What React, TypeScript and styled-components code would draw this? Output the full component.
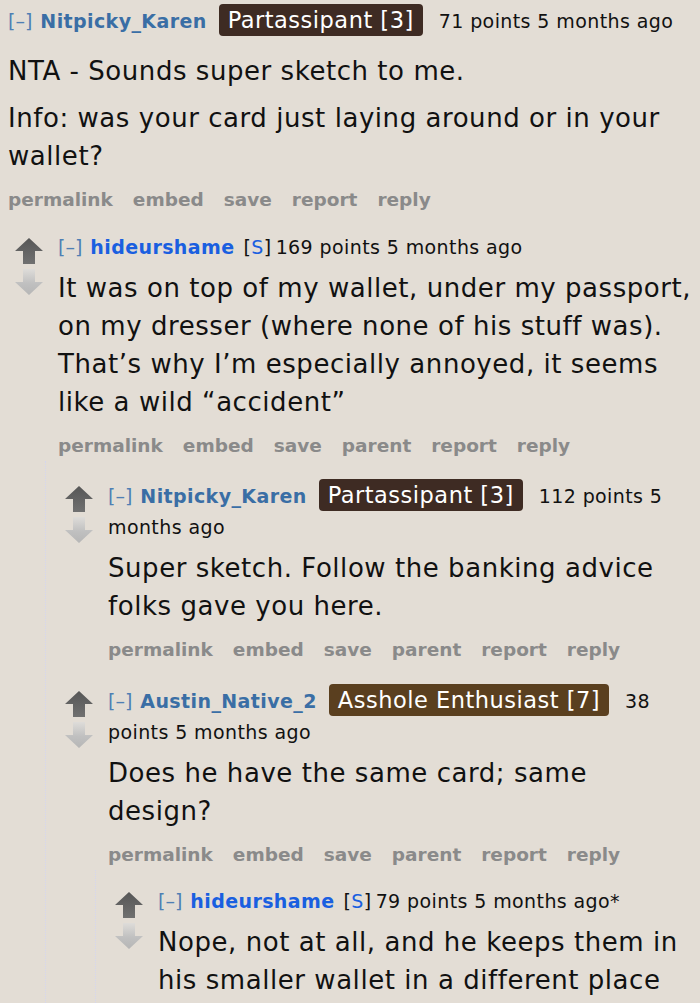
import React from "react";
import styled, { createGlobalStyle } from "styled-components";

const Global = createGlobalStyle`
  html, body { margin: 0; padding: 0; background: #e3ddd5; }
  body { font-family: "DejaVu Sans", Verdana, sans-serif; color: #111; }
`;

const Page = styled.div`
  width: 700px;
  height: 1003px;
  overflow: hidden;
  background: #e3ddd5;
  padding: 5px 5px 0 8px;
  box-sizing: border-box;
`;

const Thing = styled.div<{ $gap?: number }>`
  display: flex;
  flex-direction: column;
  margin-top: ${(p) => p.$gap ?? 0}px;
`;

const Entry = styled.div`
  display: flex;
  align-items: flex-start;
`;

const Midcol = styled.div`
  width: 50px;
  flex: none;
  display: flex;
  flex-direction: column;
  align-items: flex-start;
  padding-left: 6px;
  padding-top: 5px;
  gap: 3px;
  box-sizing: border-box;
`;

const Content = styled.div`
  flex: 1;
  min-width: 0;
`;

const Tagline = styled.div`
  font-size: 19px;
  letter-spacing: 0.4px;
  line-height: 31px;
  color: #111;
`;

const Expand = styled.span`
  color: #4f7fb4;
  margin-right: 8px;
  letter-spacing: 0;
`;

const Author = styled.span<{ $op?: boolean }>`
  font-weight: bold;
  color: ${(p) => (p.$op ? "#1a5fe0" : "#3a6ea5")};
`;

const Submitter = styled.span`
  margin-left: 9px;
  margin-right: 4px;
  & b { font-weight: normal; color: #1a5fe0; }
`;

const Flair = styled.span<{ $bg: string }>`
  display: inline;
  background: ${(p) => p.$bg};
  color: #fff;
  font-size: 22.5px;
  letter-spacing: 0.5px;
  padding: 3px 9px;
  border-radius: 4px;
  margin: 0 16px 0 12px;
`;

const Body = styled.div<{ $first?: boolean }>`
  margin-top: ${(p) => (p.$first ? "15px" : "6.5px")};
  font-size: 26px;
  letter-spacing: 0.55px;
  line-height: 38px;
  color: #111;
  & p { margin: 0 0 9px 0; }
  & p:last-child { margin-bottom: 0; }
`;

const Buttons = styled.ul`
  list-style: none;
  margin: 10px 0 0 0;
  padding: 0;
  display: flex;
  gap: 20px;
  font-size: 18.5px;
  line-height: 30px;
  font-weight: bold;
  color: #8a8a8a;
`;

const Children = styled.div`
  margin-left: 37px;
  border-left: 1px dotted #d4d6ee;
  padding-left: 12px;
`;

const UpArrow = () => (
  <svg width="30" height="28" viewBox="0 0 30 28">
    <defs>
      <linearGradient id="ug" x1="0" y1="0" x2="0" y2="1">
        <stop offset="0" stopColor="#565656" />
        <stop offset="1" stopColor="#707070" />
      </linearGradient>
    </defs>
    <polygon points="15,1 29,14 21,14 21,27 9,27 9,14 1,14" fill="url(#ug)" />
  </svg>
);

const DownArrow = () => (
  <svg width="30" height="28" viewBox="0 0 30 28">
    <defs>
      <linearGradient id="dg" x1="0" y1="0" x2="0" y2="1">
        <stop offset="0" stopColor="#dedcd9" />
        <stop offset="0.55" stopColor="#c0c0c0" />
        <stop offset="1" stopColor="#b6b6b6" />
      </linearGradient>
    </defs>
    <polygon points="9,1 21,1 21,14 29,14 15,27 1,14 9,14" fill="url(#dg)" />
  </svg>
);

type C = {
  author: string;
  op?: boolean;
  flair?: { text: string; bg: string };
  meta: React.ReactNode;
  body: string[];
  parent?: boolean;
  first?: boolean;
  gap?: number;
  children?: React.ReactNode;
};

const Comment = ({ author, op, flair, meta, body, parent, first, gap, children }: C) => {
  const btns = ["permalink", "embed", "save", ...(parent ? ["parent"] : []), "report", "reply"];
  return (
    <Thing $gap={gap}>
      <Entry>
        {!first && (
          <Midcol>
            <UpArrow />
            <DownArrow />
          </Midcol>
        )}
        <Content>
          <Tagline>
            <Expand>[–]</Expand>
            <Author $op={op}>{author}</Author>
            {op && (
              <Submitter>
                [<b>S</b>]
              </Submitter>
            )}
            {flair && <Flair $bg={flair.bg}>{flair.text}</Flair>}
            {meta}
          </Tagline>
          <Body $first={first}>
            {body.map((b, i) => (
              <p key={i}>{b}</p>
            ))}
          </Body>
          <Buttons>
            {btns.map((b) => (
              <li key={b}>{b}</li>
            ))}
          </Buttons>
        </Content>
      </Entry>
      {children && <Children>{children}</Children>}
    </Thing>
  );
};

export default function App() {
  return (
    <Page>
      <Global />
      <Comment
        first
        author="Nitpicky_Karen"
        flair={{ text: "Partassipant [3]", bg: "#3e2b23" }}
        meta="71 points 5 months ago"
        body={["NTA - Sounds super sketch to me.", "Info: was your card just laying around or in your wallet?"]}
      />
      <Comment
        gap={16.5}
        author="hideurshame"
        op
        meta="169 points 5 months ago"
        parent
        body={[
          "It was on top of my wallet, under my passport, on my dresser (where none of his stuff was). That’s why I’m especially annoyed, it seems like a wild “accident”",
        ]}
      >
        <Comment
          gap={18.5}
          author="Nitpicky_Karen"
          flair={{ text: "Partassipant [3]", bg: "#3e2b23" }}
          meta="112 points 5 months ago"
          parent
          body={["Super sketch. Follow the banking advice folks gave you here."]}
        />
        <Comment
          gap={19.5}
          author="Austin_Native_2"
          flair={{ text: "Asshole Enthusiast [7]", bg: "#5a3f1f" }}
          meta="38 points 5 months ago"
          parent
          body={["Does he have the same card; same design?"]}
        >
          <Comment
            gap={15.5}
            author="hideurshame"
            op
            meta="79 points 5 months ago*"
            parent
            body={["Nope, not at all, and he keeps them in his smaller wallet in a different place"]}
          />
        </Comment>
      </Comment>
    </Page>
  );
}
